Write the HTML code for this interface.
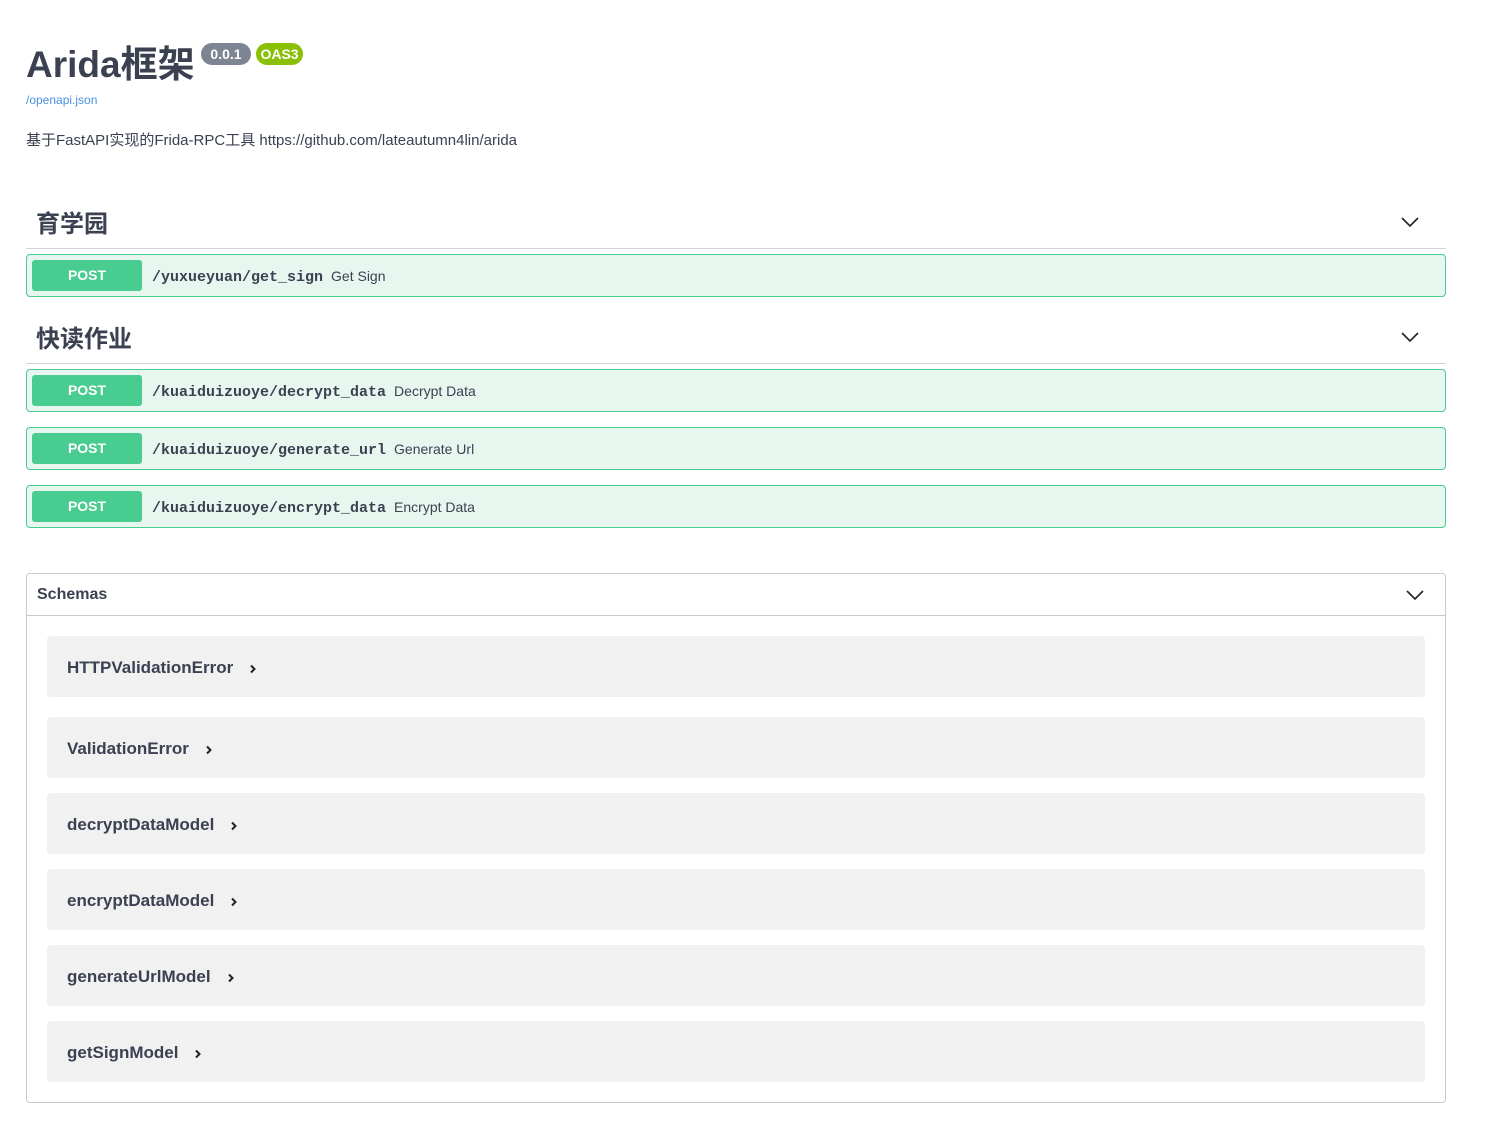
<!DOCTYPE html>
<html><head><meta charset="utf-8"><style>
*{margin:0;padding:0;box-sizing:border-box}
body{width:1502px;height:1131px;background:#fff;font-family:"Liberation Sans","Noto Sans CJK SC",sans-serif;color:#3b4151;position:relative;overflow:hidden}
.a{position:absolute}
.title{left:26px;top:40px;font-size:37px;font-weight:bold;line-height:50px;color:#3b4151}
.badge{top:43px;height:22px;border-radius:11px;color:#fff;font-weight:bold;font-size:14px;line-height:22px;text-align:center}
.tag{left:36px;font-size:24px;font-weight:bold;line-height:30px}
.hr{left:26px;width:1420px;height:1px;background:#d0d3d8}
.op{left:26px;width:1420px;height:43px;background:#e8f6f0;border:1px solid #49cc90;border-radius:4px}
.btn{position:absolute;left:5px;top:5px;width:110px;height:31px;background:#49cc90;border-radius:3px;color:#fff;font-weight:bold;font-size:14px;line-height:31px;text-align:center}
.path{position:absolute;left:125px;top:1px;line-height:41px;font-family:"Liberation Mono",monospace;font-weight:bold;font-size:15px;color:#3b4151}
.sum{font-family:"Liberation Sans",sans-serif;font-weight:normal;font-size:14px;margin-left:8px}
.sch{left:26px;top:573px;width:1420px;height:530px;border:1px solid #c9c9c9;border-radius:4px}
.item{left:47px;width:1378px;height:61px;background:#f1f1f1;border-radius:4px;font-size:17px;font-weight:bold;line-height:63px;padding-left:20px;color:#3b4151}
.item svg{margin-left:16px;vertical-align:middle}
</style></head><body>
<div class="a title">Arida框架</div>
<div class="a badge" style="left:201px;width:50px;background:#7d8492">0.0.1</div>
<div class="a badge" style="left:256px;width:47px;background:#89bf04">OAS3</div>
<div class="a" style="left:26px;top:93px;font-size:12px;color:#4990e2">/openapi.json</div>
<div class="a" style="left:26px;top:129px;font-size:15px">基于FastAPI实现的Frida-RPC工具 https://github.com/lateautumn4lin/arida</div>

<div class="a tag" style="top:210px">育学园</div>
<svg class="a" style="left:1400px;top:215px" width="20" height="14" viewBox="0 0 20 14"><path d="M2 3l8 8 8-8" fill="none" stroke="#222" stroke-width="1.6"/></svg>
<div class="a hr" style="top:248px"></div>
<div class="a op" style="top:254px"><div class="btn">POST</div><div class="path">/yuxueyuan/get_sign<span class="sum">Get Sign</span></div></div>

<div class="a tag" style="top:325px">快读作业</div>
<svg class="a" style="left:1400px;top:330px" width="20" height="14" viewBox="0 0 20 14"><path d="M2 3l8 8 8-8" fill="none" stroke="#222" stroke-width="1.6"/></svg>
<div class="a hr" style="top:363px"></div>
<div class="a op" style="top:369px"><div class="btn">POST</div><div class="path">/kuaiduizuoye/decrypt_data<span class="sum">Decrypt Data</span></div></div>
<div class="a op" style="top:427px"><div class="btn">POST</div><div class="path">/kuaiduizuoye/generate_url<span class="sum">Generate Url</span></div></div>
<div class="a op" style="top:485px"><div class="btn">POST</div><div class="path">/kuaiduizuoye/encrypt_data<span class="sum">Encrypt Data</span></div></div>

<div class="a sch"></div>
<div class="a" style="left:37px;top:586px;font-size:16px;font-weight:bold">Schemas</div>
<svg class="a" style="left:1405px;top:588px" width="20" height="14" viewBox="0 0 20 14"><path d="M2 3l8 8 8-8" fill="none" stroke="#222" stroke-width="1.6"/></svg>
<div class="a" style="left:27px;top:615px;width:1418px;height:1px;background:#c9c9c9"></div>

<div class="a item" style="top:636px">HTTPValidationError<svg width="8" height="10" viewBox="0 0 8 10"><path d="M2 1.5l3.5 3.5L2 8.5" fill="none" stroke="#222" stroke-width="2"/></svg></div>
<div class="a item" style="top:717px">ValidationError<svg width="8" height="10" viewBox="0 0 8 10"><path d="M2 1.5l3.5 3.5L2 8.5" fill="none" stroke="#222" stroke-width="2"/></svg></div>
<div class="a item" style="top:793px">decryptDataModel<svg width="8" height="10" viewBox="0 0 8 10"><path d="M2 1.5l3.5 3.5L2 8.5" fill="none" stroke="#222" stroke-width="2"/></svg></div>
<div class="a item" style="top:869px">encryptDataModel<svg width="8" height="10" viewBox="0 0 8 10"><path d="M2 1.5l3.5 3.5L2 8.5" fill="none" stroke="#222" stroke-width="2"/></svg></div>
<div class="a item" style="top:945px">generateUrlModel<svg width="8" height="10" viewBox="0 0 8 10"><path d="M2 1.5l3.5 3.5L2 8.5" fill="none" stroke="#222" stroke-width="2"/></svg></div>
<div class="a item" style="top:1021px">getSignModel<svg width="8" height="10" viewBox="0 0 8 10"><path d="M2 1.5l3.5 3.5L2 8.5" fill="none" stroke="#222" stroke-width="2"/></svg></div>
</body></html>
